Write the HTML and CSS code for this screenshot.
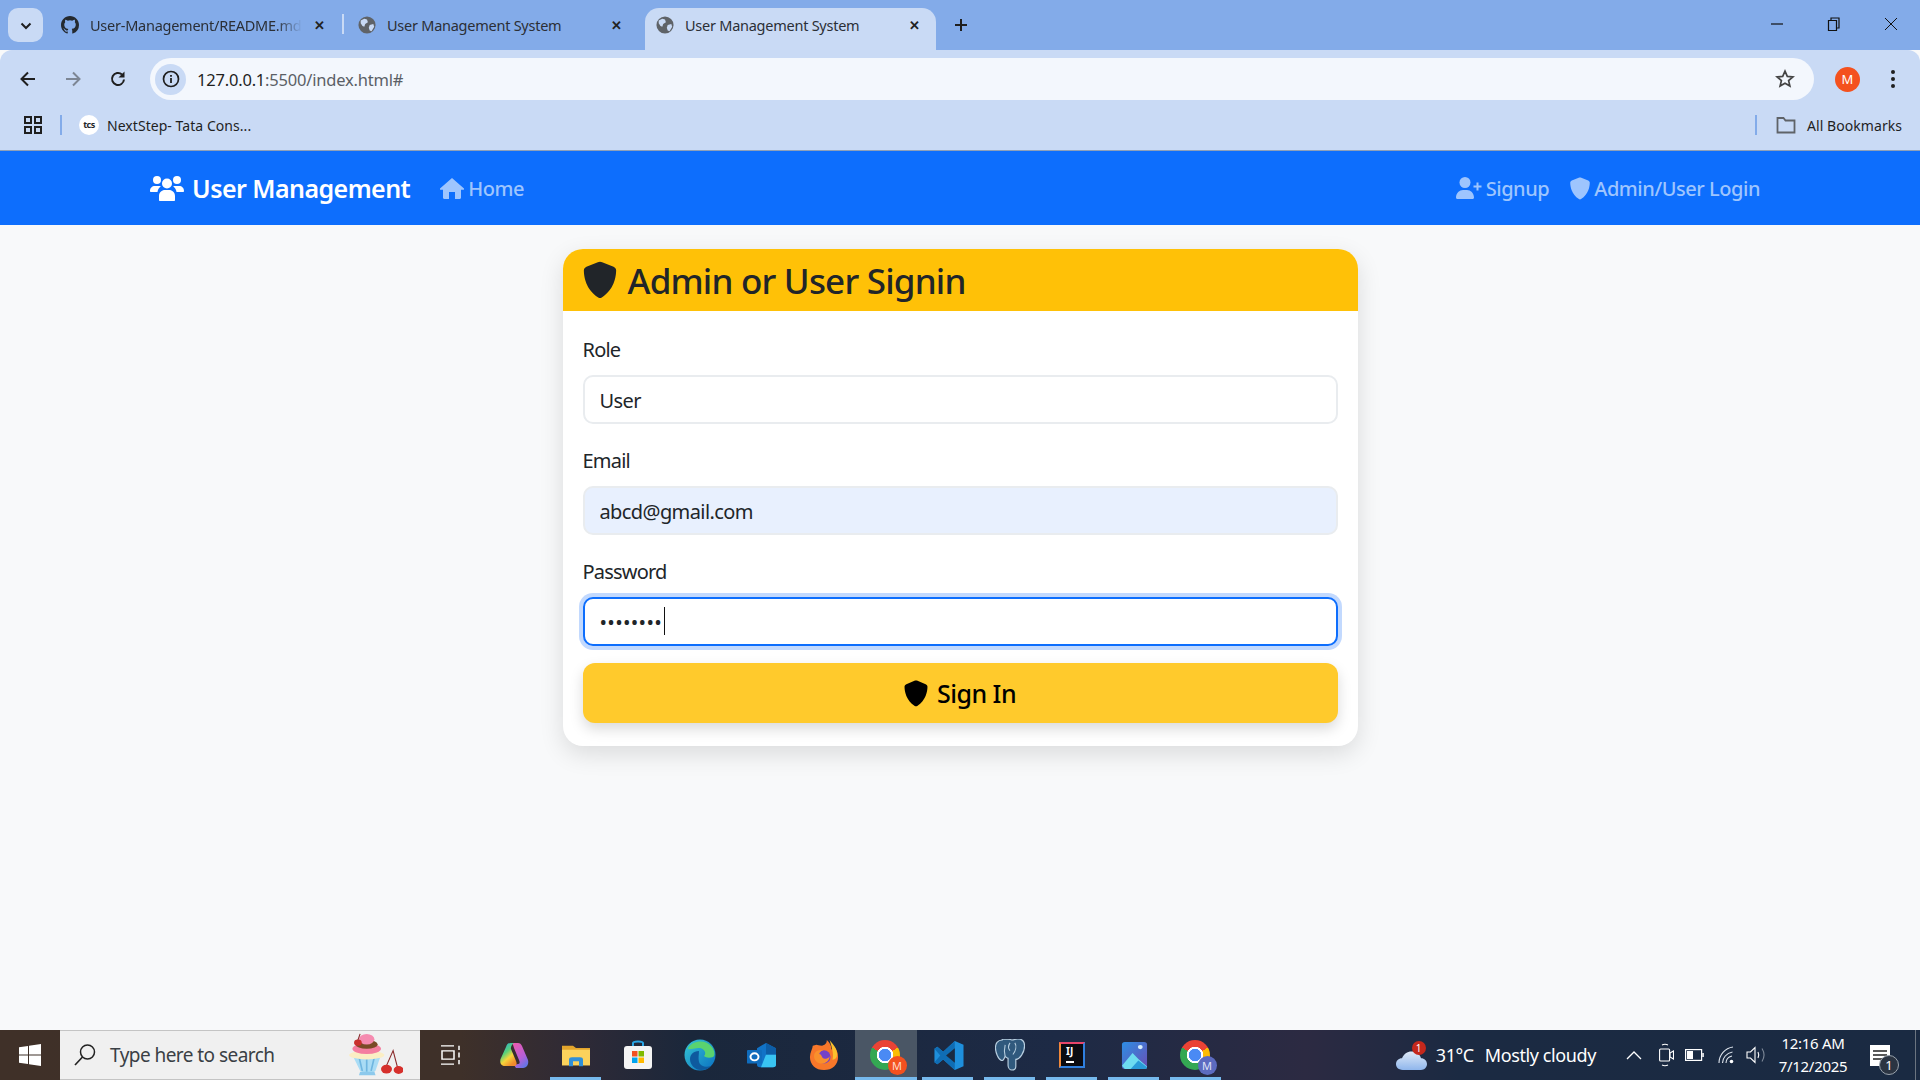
FILE: index.html
```html
<!DOCTYPE html>
<html lang="en">
<head>
  <meta charset="UTF-8" />
  <meta name="viewport" content="width=device-width, initial-scale=1" />
  <title>User Management System</title>
  <link rel="stylesheet" href="styles.css">
</head>
<body>

<svg class="defs" width="0" height="0">
  <symbol id="shield" viewBox="0 0 24 28"><path d="M12 0.5c.6 0 1.1.2 1.6.4l8.4 3.4c1.1.5 1.9 1.5 1.9 2.7-.1 4.8-1.5 14-10.6 19.9-.8.5-1.8.5-2.6 0C1.600 21 .2 11.800 .1 7c0-1.200.8-2.200 1.900-2.700l8.400-3.400c.5-.2 1-.4 1.600-.4z"/></symbol>
  <symbol id="globe" viewBox="0 0 20 20"><circle cx="10" cy="10" r="9.500" fill="#5f6368"/><path d="M3 5l4-2 3 1 1 3-3 2-1 3-2-1-2-3zM13 10l4-1 1 3-3 5-2-1-1-3z" fill="#c9daf5"/></symbol>
</svg>

<div class="tabstrip">
  <button class="tab-search"><svg width="12" height="8" viewBox="0 0 12 8"><path d="M1.500 1.500L6 6l4.500-4.500" fill="none" stroke="#1f1f1f" stroke-width="2"/></svg></button>
  <div class="tab">
    <svg class="favicon" viewBox="0 0 16 16"><path fill="#24292f" d="M8 0C3.580 0 0 3.580 0 8c0 3.540 2.290 6.530 5.470 7.590.4.070.55-.17.55-.38v-1.340c-2.230.48-2.690-1.070-2.690-1.070-.36-.92-.89-1.170-.89-1.170-.73-.5.050-.49.050-.49.800.060 1.230.830 1.230.830.710 1.220 1.870.870 2.330.660.070-.520.280-.870.510-1.070-1.780-.2-3.640-.89-3.640-3.950 0-.870.310-1.590.820-2.150-.08-.2-.36-1.020.080-2.120 0 0 .670-.210 2.200.820a7.600 7.600 0 0 1 4 0c1.530-1.040 2.200-.820 2.200-.820.440 1.100.160 1.920.080 2.120.510.560.820 1.270.820 2.150 0 3.070-1.870 3.750-3.650 3.950.290.250.540.730.540 1.480v2.200c0 .210.150.460.550.380A8.010 8.010 0 0 0 16 8c0-4.420-3.580-8-8-8z"/></svg>
    <span class="tab-title fade">User-Management/README.md</span>
    <span class="tab-close">✕</span>
    <i class="tab-sep"></i>
  </div>
  <div class="tab">
    <svg class="favicon"><use href="#globe"/></svg>
    <span class="tab-title">User Management System</span>
    <span class="tab-close">✕</span>
  </div>
  <div class="tab active">
    <svg class="favicon"><use href="#globe"/></svg>
    <span class="tab-title">User Management System</span>
    <span class="tab-close">✕</span>
  </div>
  <svg class="new-tab" width="14" height="14" viewBox="0 0 14 14"><path d="M7 1v12M1 7h12" stroke="#1f1f1f" stroke-width="2"/></svg>
  <div class="win-controls">
    <svg width="14" height="14" viewBox="0 0 14 14"><path d="M1 7h12" stroke="#111" stroke-width="1.200"/></svg>
    <svg width="14" height="14" viewBox="0 0 14 14"><path d="M1.500 3.500h8v10h-8zM4 3.500V1h8v10h-2.500" fill="none" stroke="#111" stroke-width="1.200"/></svg>
    <svg width="14" height="14" viewBox="0 0 14 14"><path d="M1 1l12 12M13 1L1 13" stroke="#111" stroke-width="1"/></svg>
  </div>
</div>

<div class="toolbar">
  <svg class="tool" width="18" height="18" viewBox="0 0 18 18"><path d="M16 9H3M9 2.500L2.500 9 9 15.500" fill="none" stroke="#1f1f1f" stroke-width="2"/></svg>
  <svg class="tool" width="18" height="18" viewBox="0 0 18 18"><path d="M2 9h13M9 2.500L15.500 9 9 15.500" fill="none" stroke="#7d8694" stroke-width="2"/></svg>
  <svg class="tool" width="18" height="18" viewBox="0 0 18 18"><path d="M15 9.500A6 6 0 1 1 13 4.500" fill="none" stroke="#1f1f1f" stroke-width="2"/><path d="M15.500 1.500v6h-6z" fill="#1f1f1f"/></svg>
  <div class="omnibox">
    <span class="site-info"><svg width="18" height="18" viewBox="0 0 18 18"><circle cx="9" cy="9" r="7.500" fill="none" stroke="#1f1f1f" stroke-width="1.700"/><path d="M9 8v5M9 5v1.700" stroke="#1f1f1f" stroke-width="1.800"/></svg></span>
    <span class="url">127.0.0.1<span class="url-dim">:5500/index.html#</span></span>
    <svg class="star" width="20" height="20" viewBox="0 0 20 20"><path d="M10 2.200l2.300 5.200 5.600.5-4.300 3.700 1.300 5.500L10 14.200l-4.900 2.900 1.300-5.500-4.300-3.700 5.600-.5z" fill="none" stroke="#444" stroke-width="1.700"/></svg>
  </div>
  <span class="avatar">M</span>
  <svg class="menu-dots" width="6" height="20" viewBox="0 0 6 20"><circle cx="3" cy="3" r="2"/><circle cx="3" cy="10" r="2"/><circle cx="3" cy="17" r="2"/></svg>
</div>

<div class="bookmarks">
  <svg width="20" height="20" viewBox="0 0 20 20"><path d="M2 2h6v6H2zM12 2h6v6h-6zM2 12h6v6H2zM12 12h6v6h-6z" fill="none" stroke="#1f1f1f" stroke-width="2"/></svg>
  <i class="bm-sep"></i>
  <span class="tcs">tcs</span>
  <span class="bm-label">NextStep- Tata Cons...</span>
  <i class="bm-sep push"></i>
  <svg class="bm-folder" width="20" height="18" viewBox="0 0 20 18"><path d="M1.500 2h6l2 2.500h9v12h-17z" fill="none" stroke="#5f6368" stroke-width="1.800"/></svg>
  <span class="bm-label">All Bookmarks</span>
</div>

<nav class="navbar">
  <a class="brand" href="#">
    <svg class="ico-brand" width="34" height="26" viewBox="0 0 34 26" fill="#fff"><circle cx="7" cy="5" r="4"/><circle cx="27" cy="5" r="4"/><circle cx="17" cy="8.500" r="5"/><path d="M0 16c0-3 2-5 5-5h4c.7 0 1.300.2 1.800.4-1.800 1.200-3 3-3.300 5.600H1c-.6 0-1-.4-1-1zM34 16c0-3-2-5-5-5h-4c-.7 0-1.300.2-1.800.4 1.800 1.200 3 3 3.300 5.600H33c.6 0 1-.4 1-1zM10 26c-.6 0-1-.4-1-1v-4c0-3.500 2.700-6 6-6h4c3.300 0 6 2.500 6 6v4c0 .6-.4 1-1 1z"/></svg>
    User Management
  </a>
  <a class="nav-link" href="#">
    <svg width="24" height="21" viewBox="0 0 24 21" fill="currentColor"><path d="M12 0l12 10.500c.4.500 0 1.300-.7 1.300H21v8c0 .7-.5 1.200-1.200 1.200H15v-7H9v7H4.200C3.500 21 3 20.500 3 19.800v-8H.7c-.7 0-1.100-.8-.7-1.300z"/></svg>
    Home
  </a>
  <div class="nav-right">
    <a class="nav-link" href="#">
      <svg width="26" height="22" viewBox="0 0 26 22" fill="currentColor"><circle cx="9" cy="5.500" r="5.500"/><path d="M0 20.500C0 16 3.500 13 7 13h4c3.500 0 7 3 7 7.500 0 .8-.6 1.500-1.400 1.500H1.400C.6 22 0 21.300 0 20.500zM20.500 5.500h2v3h3v2h-3v3h-2v-3h-3v-2h3z"/></svg>
      Signup
    </a>
    <a class="nav-link" href="#">
      <svg width="20" height="23"><use href="#shield" fill="currentColor"/></svg>
      Admin/User Login
    </a>
  </div>
</nav>

<main class="page">
  <div class="card">
    <div class="card-header">
      <svg width="34" height="38"><use href="#shield"/></svg>
      <h3>Admin or User Signin</h3>
    </div>
    <form class="card-body">
      <div class="field">
        <label>Role</label>
        <input class="form-control" type="text" value="User" readonly />
      </div>
      <div class="field">
        <label>Email</label>
        <input class="form-control filled" type="text" value="abcd@gmail.com" readonly />
      </div>
      <div class="field">
        <label>Password</label>
        <div class="caret-wrap">
          <input class="form-control focused" type="password" value="abcdefgh" readonly />
          <i class="caret"></i>
        </div>
      </div>
      <button class="btn-signin" type="button">
        <svg width="24" height="27"><use href="#shield"/></svg>
        Sign In
      </button>
    </form>
  </div>
</main>

<footer class="taskbar">
  <div class="start"><svg width="22" height="22" viewBox="0 0 22 22" fill="#fff"><path d="M0 3.200l9-1.300v8.500H0zM10 1.800L22 0v10.400H10zM0 11.500h9V20l-9-1.300zM10 11.500h12V22l-12-1.800z"/></svg></div>
  <div class="search">
    <svg width="24" height="24" viewBox="0 0 24 24"><circle cx="14.500" cy="9" r="7" fill="none" stroke="#222" stroke-width="1.500"/><path d="M9.500 14L2 22" stroke="#222" stroke-width="1.700"/></svg>
    <span>Type here to search</span>
    <svg class="cupcake" width="55" height="44" viewBox="3 0 50 50" preserveAspectRatio="none">
      <path d="M7 25l26 0-5 18c-1 3-12 3-14 0z" fill="#a9dcf5"/>
      <path d="M13 27l3 16M20 27v17M27 27l-3 16" stroke="#6fb6e0" stroke-width="1.500"/>
      <path d="M14 44h13l1 4H13z" fill="#8cc9ec"/>
      <ellipse cx="20" cy="25" rx="16" ry="5" fill="#fbeec4"/>
      <ellipse cx="20" cy="18" rx="13" ry="6" fill="#f47ea0"/>
      <ellipse cx="20" cy="13" rx="10" ry="5" fill="#7a4a26"/>
      <ellipse cx="20" cy="7" rx="7" ry="6" fill="#f58bb0"/>
      <circle cx="12" cy="11" r="3.500" fill="#c9302c"/>
      <path d="M12 8l2-7M38 37l6-17 4 19" fill="none" stroke="#8a2c2c"/>
      <circle cx="38" cy="41" r="5" fill="#d6302c"/>
      <circle cx="49" cy="42" r="4.500" fill="#d6302c"/>
    </svg>
  </div>
  <div class="apps">
    <span class="app taskview"><svg width="20" height="20" viewBox="0 0 20 24" preserveAspectRatio="none" fill="none" stroke="#fff" stroke-width="1.500"><path d="M1 1h13M1 23h13M2 7h12v10H2zM19 1v5M19 9v6M19 18v5"/></svg></span>
    <span class="app"><svg width="29" height="25" viewBox="0 0 29 25"><defs><linearGradient id="copa" x1="0" y1="0" x2=".6" y2="1"><stop offset="0" stop-color="#1ea7e8"/><stop offset=".45" stop-color="#58cf7a"/><stop offset=".7" stop-color="#f7d53a"/><stop offset="1" stop-color="#f08a2c"/></linearGradient><linearGradient id="copb" x1=".2" y1="0" x2=".8" y2="1"><stop offset="0" stop-color="#e95bb0"/><stop offset=".6" stop-color="#b55fd8"/><stop offset="1" stop-color="#5a78e8"/></linearGradient></defs><path d="M12 0h6c2 0 3 1 4 3l6 14c1 4-1 8-5 8h-7l-2-3 4-1c2 0 2-2 1-4L14 5c-.6-2-1-4-2-5z" fill="url(#copb)"/><path d="M11 0C8 0 7 1 6 4L1 15c-2 4 0 8 4 8h9c3 0 3-3 2-5l-5-12c-.5-2 1-5 3-6z" fill="url(#copa)"/></svg></span>
    <span class="app under"><svg width="28" height="23" viewBox="0 0 28 28" preserveAspectRatio="none"><path d="M0 2h11l3 3h14v21H0z" fill="#e3a52c"/><path d="M0 7h28v19H0z" fill="#fbd25c"/><path d="M7 27v-8c0-2 1-3 3-3h8c2 0 3 1 3 3v8h-4v-6h-6v6z" fill="#2f8fd8"/></svg></span>
    <span class="app"><svg width="30" height="30" viewBox="0 0 30 30"><path d="M10 6V3c0-2 10-2 10 0v3" fill="none" stroke="#2aa7e6" stroke-width="2"/><rect x="1" y="6" width="28" height="23" rx="3" fill="#f4f4f4"/><path d="M9 11h5.500v5.500H9z" fill="#f25022"/><path d="M15.500 11H21v5.500h-5.500z" fill="#7fba00"/><path d="M9 17.500h5.500V23H9z" fill="#00a4ef"/><path d="M15.500 17.500H21V23h-5.500z" fill="#ffb900"/></svg></span>
    <span class="app"><svg width="32" height="32" viewBox="0 0 32 32"><defs><linearGradient id="edg" x1="0" y1="0" x2="1" y2="1"><stop offset="0" stop-color="#36c6d3"/><stop offset="1" stop-color="#0a6fc2"/></linearGradient></defs><circle cx="16" cy="16" r="15.500" fill="url(#edg)"/><path d="M4 9C8 2 21-1 28 8c3 4 3 9 1 10-3 1-7 1-9-1 3-3 0-8-5-8-6 0-11 3-11 0z" fill="#5ad36f"/><path d="M15 12c-6 0-9 4-9 8 0 6 5 11 11 11 4 0 7-1 10-4-5 2-11 0-12-4s0-8 0-11z" fill="#0e5a9e"/></svg></span>
    <span class="app"><svg width="30" height="27" viewBox="0 0 30 30" preserveAspectRatio="none"><path d="M10 7l9-6 10 6v18c0 2-1 3-3 3H13c-2 0-3-1-3-3z" fill="#1173c7"/><path d="M19 14h10v11c0 2-1 3-3 3H14z" fill="#39c4f2"/><path d="M19 1l10 6v7H19z" fill="#0d5da6"/><rect x="0" y="9" width="15" height="15" rx="1" fill="#0f6cbd"/><circle cx="7.500" cy="16.500" r="4" fill="none" stroke="#fff" stroke-width="2"/></svg></span>
    <span class="app"><svg width="30" height="30" viewBox="0 0 30 32"><path d="M3 6c0 3-3 7-3 12 0 8 6 14 15 14s15-6 15-14c0-5-2-8-4-11-1 2-2 3-3 3 0-4-2-7-5-10 0 4-2 5-5 6-3 0-5-1-6-1z" fill="#f7772a"/><path d="M21 0c2 3 8 8 8 15 0 4-2 6-5 6 2-6-1-14-3-21z" fill="#fbc02d"/><circle cx="15" cy="18" r="7" fill="#7542c8"/><path d="M5 14c2-3 6-4 9-3-3 1-4 3-4 4 3 0 2 5 6 5 4 0 5-3 5-3 0 6-6 9-10 8-5-1-8-6-6-11z" fill="#f9902c"/></svg></span>
    <span class="app current"><span class="chrome"><span class="profile orange">M</span></span></span>
    <span class="app under"><svg width="31" height="31" viewBox="0 0 31 32"><path d="M22 1l9 4v22l-9 4-12-11-6 5-3-2V9l3-2 6 5z" fill="#1e8fdc"/><path d="M22 1v30L10 20l-6 5-3-2 6-7-6-7 3-2 6 5z" fill="#0f6db5"/><path d="M22 8.500L13 16l9 7.500z" fill="#1a2a40"/></svg></span>
    <span class="app under"><svg width="30" height="32" viewBox="0 0 30 33"><path d="M7 1C2 1 0 5 0 9c0 5 3 12 6 13 2 1 3-2 4-4 1 1 2 2 3 2v7c0 3 2 5 4 5 3 0 4-2 4-4v-7c4 0 9-7 9-14 0-5-3-7-7-7-2 0-4 1-6 1-3-1-6-1-10-1z" fill="#30597d" stroke="#b9cfe0" stroke-width="1.200"/><path d="M10 6c-1 4-1 8 0 12M20 4c2 3 1 8-2 12M15 4c-2 3-2 6 0 8" fill="none" stroke="#b9cfe0" stroke-width="1.100"/></svg></span>
    <span class="app under"><span class="idea">IJ<i></i></span></span>
    <span class="app under"><svg width="27" height="27" viewBox="0 0 28 32" preserveAspectRatio="none"><defs><linearGradient id="pho" x1="0" y1="0" x2="1" y2="1"><stop offset="0" stop-color="#2d8ee4"/><stop offset="1" stop-color="#6a4fb5"/></linearGradient></defs><rect width="26" height="32" x="1" rx="3" fill="url(#pho)"/><circle cx="20" cy="6" r="2.500" fill="#d7eefc"/><path d="M1 28l11-15 6 7 9 9-1 3H4z" fill="#6ddcf0"/><path d="M10 32l8-10 9 8-1 2z" fill="#2a9bd8"/></svg></span>
    <span class="app under"><span class="chrome"><span class="profile violet">M</span></span></span>
  </div>
  <div class="tray">
    <div class="weather">
      <svg width="31" height="22" viewBox="0 0 36 26" preserveAspectRatio="none"><defs><linearGradient id="cld" x1="0" y1="0" x2="0" y2="1"><stop offset="0" stop-color="#dfeaf8"/><stop offset="1" stop-color="#8fb6ec"/></linearGradient></defs><path d="M8 26C2 26 0 22 0 19c0-4 3-7 7-7 2-5 6-8 11-8 5 0 10 3 11 8 4 0 7 3 7 7 0 4-3 7-7 7z" fill="url(#cld)"/></svg>
      <b class="w-badge">1</b>
    </div>
    <span class="temp">31°C</span>
    <span class="temp">Mostly cloudy</span>
    <svg class="tray-chev" width="16" height="10" viewBox="0 0 16 10"><path d="M1 9l7-7 7 7" fill="none" stroke="#fff" stroke-width="1.300"/></svg>
    <svg class="tray-cam" width="15" height="24" viewBox="0 0 15 24" fill="none" stroke="#fff" stroke-width="1.100"><rect x=".6" y="6" width="10" height="12" rx="1"/><path d="M11 10l3.500-2v8L11 14zM3 2c2-1 4-1 6 0M3 22c2 1 4 1 6 0"/></svg>
    <svg class="tray-bat" width="19" height="12" viewBox="0 0 19 12"><rect x=".6" y=".6" width="16" height="10.800" fill="none" stroke="#fff" stroke-width="1.200"/><rect x="2" y="2" width="6" height="8" fill="#fff"/><rect x="17.300" y="4" width="1.500" height="4" fill="#fff"/></svg>
    <svg class="tray-wifi" width="16" height="18" viewBox="0 0 16 18" fill="none" stroke="#dfe5ee" stroke-width="1.100"><path d="M1 17C1 9 7 2 15 1M4.500 17c0-5 4-10 10-11M8 17c0-3 2-6 6-7"/><circle cx="13.500" cy="15.500" r="1.800" fill="#fff" stroke="none"/></svg>
    <svg class="tray-vol" width="20" height="18" viewBox="0 0 20 18" fill="none" stroke="#fff" stroke-width="1.100"><path d="M1 6h3.500L9 1.500v15L4.500 12H1zM12 6c1 2 1 4 0 6"/><path d="M16 2.500c2.500 4 2.500 9 0 13" stroke="#7f8a99"/></svg>
    <div class="clock"><span>12:16 AM</span><span>7/12/2025</span></div>
    <div class="notify">
      <svg width="20" height="21" viewBox="0 0 20 21"><path d="M0 0h20v21H0z" fill="#fff"/><path d="M3 6h14M3 10h14M3 14h10" stroke="#222" stroke-width="1.300"/></svg>
      <b class="n-badge">1</b>
    </div>
    <i class="show-desktop"></i>
  </div>
</footer>

</body>
</html>
```

FILE: styles.css
```css
* {
  box-sizing: border-box;
}

body {
  margin: 0;
  width: 1920px;
  height: 1080px;
  overflow: hidden;
  display: flex;
  flex-direction: column;
  font-family: "Noto Sans", Arial, sans-serif;
  color: #212529;
  background: #f8f9fa;
}

a {
  color: inherit;
  text-decoration: none;
}

.defs {
  position: absolute;
}

/* browser chrome */
.tabstrip {
  height: 50px;
  flex: none;
  display: flex;
  align-items: flex-end;
  padding-left: 8px;
  background: #83abe9;
}

.tab-search {
  width: 35px;
  height: 34px;
  margin: 0 5px 8px 0;
  padding: 0;
  border: 0;
  border-radius: 10px;
  background: #c9daf5;
}

.tab {
  position: relative;
  width: 297px;
  height: 42px;
  display: flex;
  align-items: center;
  padding: 0 15px 8px 13px;
  font-size: 14.500px;
  letter-spacing: -0.250px;
  color: #2b2f36;
}

.tab.active {
  width: 291px;
  margin: 0 3px;
  padding-left: 11px;
  padding-right: 11px;
  border-radius: 14px 14px 0 0;
  background: #c9daf5;
}

.favicon {
  width: 18px;
  height: 18px;
  flex: none;
  margin-right: 11px;
}

.tab-title {
  flex: 1;
  overflow: hidden;
  white-space: nowrap;
}

.tab-title.fade {
  -webkit-mask-image: linear-gradient(to right, #000 88%, transparent);
  mask-image: linear-gradient(to right, #000 88%, transparent);
}

.tab-close {
  width: 22px;
  margin-left: 6px;
  font-size: 13px;
  font-weight: 700;
  text-align: center;
  color: #222;
}

.tab-sep {
  position: absolute;
  right: 1px;
  top: 6px;
  width: 2px;
  height: 20px;
  background: #c9daf5;
}

.new-tab {
  margin: 0 0 18px 15px;
}

.win-controls {
  margin-left: auto;
  align-self: flex-start;
  display: flex;
  gap: 43px;
  padding: 17px 22px 0 0;
}

.toolbar {
  height: 50px;
  flex: none;
  display: flex;
  align-items: center;
  padding: 8px 0 0 19px;
  border-radius: 12px 12px 0 0;
  background: #c9daf5;
}

.tool {
  margin-right: 27px;
  flex: none;
}

.omnibox {
  width: 1664px;
  height: 42px;
  margin-left: -4px;
  display: flex;
  align-items: center;
  padding: 0 19px 0 5px;
  border-radius: 21px;
  background: #f3f7fd;
}

.site-info {
  width: 31px;
  height: 31px;
  display: flex;
  align-items: center;
  justify-content: center;
  border-radius: 50%;
  background: #c9daf5;
}

.url {
  margin-left: 11px;
  font-size: 16.500px;
  letter-spacing: -0.200px;
  color: #1f1f1f;
}

.url-dim {
  color: #5b5f66;
}

.star {
  margin-left: auto;
}

.avatar {
  width: 25px;
  height: 25px;
  margin-left: 21px;
  border-radius: 50%;
  background: #f4511e;
  color: #fff;
  font-size: 13px;
  line-height: 25px;
  text-align: center;
}

.menu-dots {
  margin-left: 30px;
  fill: #1f1f1f;
}

.bookmarks {
  height: 51px;
  flex: none;
  display: flex;
  align-items: center;
  padding: 0 18px 0 23px;
  border-bottom: 1px solid #8ea0b8;
  background: #c9daf5;
}

.bm-sep {
  width: 2px;
  height: 20px;
  margin: 0 17px;
  background: #83abe9;
}

.bm-sep.push {
  margin: 0 0 0 auto;
}

.tcs {
  width: 20px;
  height: 20px;
  margin-right: 8px;
  border-radius: 50%;
  background: #fff;
  font-size: 9px;
  font-weight: 700;
  line-height: 19px;
  text-align: center;
  letter-spacing: -0.500px;
}

.bm-label {
  font-size: 14px;
  letter-spacing: 0.050px;
  color: #1f1f1f;
}

.bm-folder {
  margin: 0 11px 0 19px;
}

/* page */
.navbar {
  height: 74px;
  flex: none;
  display: flex;
  align-items: center;
  padding: 0 160px 0 150px;
  background: #0d6efd;
  color: #9ec5fe;
}

.brand {
  display: flex;
  align-items: center;
  gap: 8px;
  margin-right: 30px;
  font-size: 25px;
  font-weight: 600;
  letter-spacing: -0.550px;
  color: #fff;
}

.nav-link {
  display: flex;
  align-items: center;
  gap: 4px;
  font-size: 20px;
  font-weight: 500;
  letter-spacing: -0.450px;
}

.nav-right {
  margin-left: auto;
  display: flex;
  gap: 21px;
}

.page {
  flex: 1;
  display: flex;
  justify-content: center;
  align-items: flex-start;
  padding-top: 24px;
}

.card {
  width: 795px;
  border-radius: 20px;
  background: #fff;
  box-shadow: 0 8px 24px rgba(0, 0, 0, 0.12);
}

.card-header {
  height: 62px;
  display: flex;
  align-items: center;
  gap: 11px;
  padding: 0 20px;
  border-radius: 20px 20px 0 0;
  background: #ffc107;
  fill: #212529;
}

.card-header h3 {
  margin: 2px 0 0;
  font-size: 35px;
  font-weight: 500;
  letter-spacing: -0.800px;
  line-height: 1.200;
}

.card-body {
  display: flex;
  flex-direction: column;
  padding: 24px 20px 23px;
}

.field {
  margin-bottom: 22px;
}

.field:nth-child(3) {
  margin-bottom: 17px;
}

.field label {
  display: block;
  height: 30px;
  margin-bottom: 10px;
  font-size: 20px;
  letter-spacing: -0.800px;
  line-height: 30px;
}

.form-control {
  display: block;
  width: 100%;
  height: 49px;
  padding: 2px 15px 0;
  border: 2px solid #e9ecef;
  border-radius: 10px;
  outline: 0;
  background: #fff;
  color: #212529;
  font-family: inherit;
  font-size: 20px;
  letter-spacing: -0.600px;
}

.form-control.filled {
  background: #e8f0fe;
}

.form-control.focused {
  border-color: #0d6efd;
  box-shadow: 0 0 0 4px #c2d9fe;
  letter-spacing: 0.300px;
}

.caret-wrap {
  position: relative;
}

.caret {
  position: absolute;
  left: 81px;
  top: 10px;
  width: 1px;
  height: 28px;
  background: #111;
}

.btn-signin {
  height: 60px;
  display: flex;
  align-items: center;
  justify-content: center;
  gap: 9px;
  border: 0;
  border-radius: 12px;
  background: #ffca2c;
  box-shadow: 0 6px 14px rgba(0, 0, 0, 0.15);
  color: #000;
  font-family: inherit;
  font-size: 25px;
  font-weight: 500;
  letter-spacing: -0.500px;
}

/* windows taskbar */
.taskbar {
  height: 50px;
  flex: none;
  display: flex;
  align-items: center;
  background: linear-gradient(90deg, #3f3028 0, #3e3029 24%, #2f2a36 30%, #1a273b 36%, #1d2a45 55%, #2c2a42 68%, #1b2a42 76%, #1a2a42 100%);
  color: #fff;
}

.start {
  width: 60px;
  height: 50px;
  display: flex;
  align-items: center;
  justify-content: center;
}

.search {
  width: 360px;
  height: 50px;
  display: flex;
  align-items: center;
  padding-left: 13px;
  border: 1px solid #c4c4c4;
  border-width: 1px 0;
  background: #f0f0f0;
  color: #3a3f45;
  font-size: 19px;
}

.search span {
  margin-left: 13px;
  letter-spacing: -0.550px;
}

.cupcake {
  margin-left: auto;
  margin-right: 17px;
}

.apps {
  display: flex;
  padding-left: 1px;
}

.app {
  position: relative;
  width: 62px;
  height: 50px;
  display: flex;
  align-items: center;
  justify-content: center;
}

.app.taskview {
  padding-right: 4px;
}

.app.under::after,
.app.current::after {
  content: "";
  position: absolute;
  left: 5px;
  right: 6px;
  bottom: 0;
  height: 3px;
  background: #76b9ed;
}

.app.current {
  background: #4a5665;
}

.app.current::after {
  left: 0;
  right: 0;
}

.chrome {
  position: relative;
  width: 30px;
  height: 30px;
  margin-left: -3px;
  border-radius: 50%;
  background:
    radial-gradient(circle, #4a8af4 0 6px, #fff 6.500px 8px, transparent 8.500px),
    conic-gradient(from 60deg, #fbbc04 0 60deg, #34a853 60deg 180deg, #34a853 180deg 240deg, #ea4335 240deg 360deg);
}

.profile {
  position: absolute;
  right: -7px;
  bottom: -5px;
  width: 19px;
  height: 19px;
  border-radius: 50%;
  color: #ffd9c9;
  font-size: 11px;
  line-height: 19px;
  text-align: center;
}

.profile.orange {
  background: #f4511e;
}

.profile.violet {
  background: #5c6bc0;
  color: #dfe3f7;
}

.idea {
  position: relative;
  width: 26px;
  height: 26px;
  padding-left: 5px;
  background: #0b0b12;
  border: 2px solid #2f7fe0;
  border-top-color: #e8456b;
  border-left-color: #f0883a;
  color: #fff;
  font-size: 10px;
  font-weight: 700;
  line-height: 14px;
}

.idea i {
  position: absolute;
  left: 5px;
  bottom: 3px;
  width: 8px;
  height: 2px;
  background: #fff;
}

.tray {
  margin-left: auto;
  height: 50px;
  display: flex;
  align-items: center;
  font-size: 18px;
}

.weather {
  position: relative;
  width: 31px;
  height: 22px;
  margin: 8px 9px 0 0;
}

.w-badge {
  position: absolute;
  right: 1px;
  top: -7px;
  width: 14px;
  height: 14px;
  border-radius: 50%;
  background: #c4281c;
  font-size: 10px;
  font-weight: 400;
  line-height: 14px;
  text-align: center;
}

.temp {
  margin-right: 11px;
  letter-spacing: -0.400px;
  white-space: nowrap;
}

.tray-chev {
  margin-left: 19px;
}

.tray-cam {
  margin-left: 17px;
}

.tray-bat {
  margin-left: 11px;
}

.tray-wifi {
  margin-left: 14px;
}

.tray-vol {
  margin-left: 12px;
}

.clock {
  width: 84px;
  margin-left: 5px;
  display: flex;
  flex-direction: column;
  align-items: center;
  font-size: 15px;
  line-height: 23px;
  letter-spacing: -0.300px;
}

.notify {
  position: relative;
  width: 20px;
  height: 21px;
  margin: 0 25px 0 15px;
}

.n-badge {
  position: absolute;
  left: 9px;
  top: 10px;
  width: 20px;
  height: 20px;
  border: 1px solid #9aa3ad;
  border-radius: 50%;
  background: #2b3442;
  font-size: 13px;
  font-weight: 400;
  line-height: 18px;
  text-align: center;
}

.show-desktop {
  width: 1px;
  height: 50px;
  margin-right: 4px;
  background: #6b7480;
}
```
